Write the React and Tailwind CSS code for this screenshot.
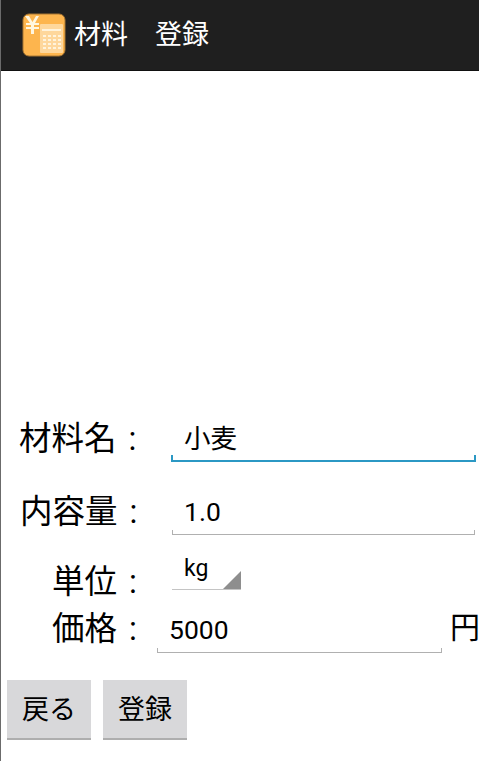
const cjk = "font-['Roboto','Noto_Sans_CJK_JP',sans-serif]";

const Label = ({ children, className = "" }) => (
  <div className={`shrink-0 text-[32.5px] leading-[40px] text-black whitespace-nowrap ${className}`}>
    {children}
    <span className="ml-[12px]">:</span>
  </div>
);

// android holo style edit text: underline with little end ticks
const Field = ({ value, focused, className = "" }) => (
  <div
    className={`relative shrink-0 h-[40px] flex items-center text-[26.5px] text-black ${
      focused ? "pb-[4px] border-b-[2px] border-[#2b98c4]" : "pb-[6px] border-b border-[#b0b0b0]"
    } ${className}`}
  >
    {value}
    <span className={`absolute left-0 bottom-0 ${focused ? "h-[5px] w-[2px] bg-[#2b98c4]" : "h-[4px] w-px bg-[#b0b0b0]"}`} />
    <span className={`absolute right-0 bottom-0 ${focused ? "h-[5px] w-[2px] bg-[#2b98c4]" : "h-[4px] w-px bg-[#b0b0b0]"}`} />
  </div>
);

const AppIcon = () => (
  <svg width="44" height="44" viewBox="0 0 44 44" className="shrink-0">
    <rect x="1" y="1" width="42" height="42" rx="6" fill="#fdb54e" stroke="#a87632" strokeWidth="1" />
    <path d="M3 3 L8 10 L4 10 L4 12 L9 12 L9 14 L4 14 L4 16 L9 16 L9 21 L12 21 L12 16 L17 16 L17 14 L12 14 L12 12 L17 12 L17 10 L13 10 L17 3 L14 3 L10.5 9 L7 3 Z" fill="#fff6e0" />
    <rect x="18" y="11" width="23" height="29" rx="1" fill="#fed79c" />
    <rect x="20" y="16" width="19" height="2" fill="#fff3dc" />
    {[22, 26, 30, 34].map((y) =>
      [21, 26, 31, 36].map((x) => <rect key={`${x}-${y}`} x={x} y={y} width="3" height="2" fill="#fff3dc" />)
    )}
  </svg>
);

const Btn = ({ children }) => (
  <button className="w-[84px] h-[60px] pt-[3px] bg-[#d8d8da] border-b-2 border-[#aeaeae] text-[27px] text-black flex items-center justify-center">
    {children}
  </button>
);

export default function App() {
  return (
    <div className={`w-[479px] h-[761px] flex flex-col bg-white border-l border-[#6b6b6b] overflow-hidden ${cjk}`}>
      <header className="h-[71px] shrink-0 bg-[#1f1f1f] border-b border-[#111] flex items-center pl-[21px] gap-[8px]">
        <AppIcon />
        <h1 className="text-[27px] text-white whitespace-nowrap">材料　登録</h1>
      </header>

      <main className="flex-1 flex flex-col justify-end pb-[21px]">
        <div className="flex items-end h-[40px] mb-[33px]">
          <Label className="pl-[18px] w-[170px] mb-[3px]">材料名</Label>
          <Field value="小麦" focused className="w-[305px] pl-[13px]" />
        </div>
        <div className="flex items-end h-[40px] mb-[21px]">
          <Label className="pl-[19px] w-[171px] mb-[3px]">内容量</Label>
          <Field value="1.0" className="w-[303px] pl-[12px]" />
        </div>
        <div className="flex items-end h-[34px] mb-[23px]">
          <Label className="pl-[51px] w-[171px] -mb-[12px]">単位</Label>
          <div className="relative w-[69px] h-[34px] border-b border-[#c4c4c4] text-[23px] text-black pl-[12px] leading-[26px]">
            kg
            <span className="absolute right-0 bottom-0 w-0 h-0 border-l-[18px] border-l-transparent border-b-[18px] border-b-[#8e8e8e]" />
          </div>
        </div>
        <div className="flex items-end h-[40px] mb-[27px]">
          <Label className="pl-[51px] w-[156px] mb-[4px]">価格</Label>
          <Field value="5000" className="w-[285px] pl-[12px]" />
          <span className="ml-[8px] shrink-0 text-[30px] leading-[40px] text-black mb-[5px]">円</span>
        </div>
        <div className="flex gap-[12px] pl-[6px]">
          <Btn>戻る</Btn>
          <Btn>登録</Btn>
        </div>
      </main>
    </div>
  );
}
